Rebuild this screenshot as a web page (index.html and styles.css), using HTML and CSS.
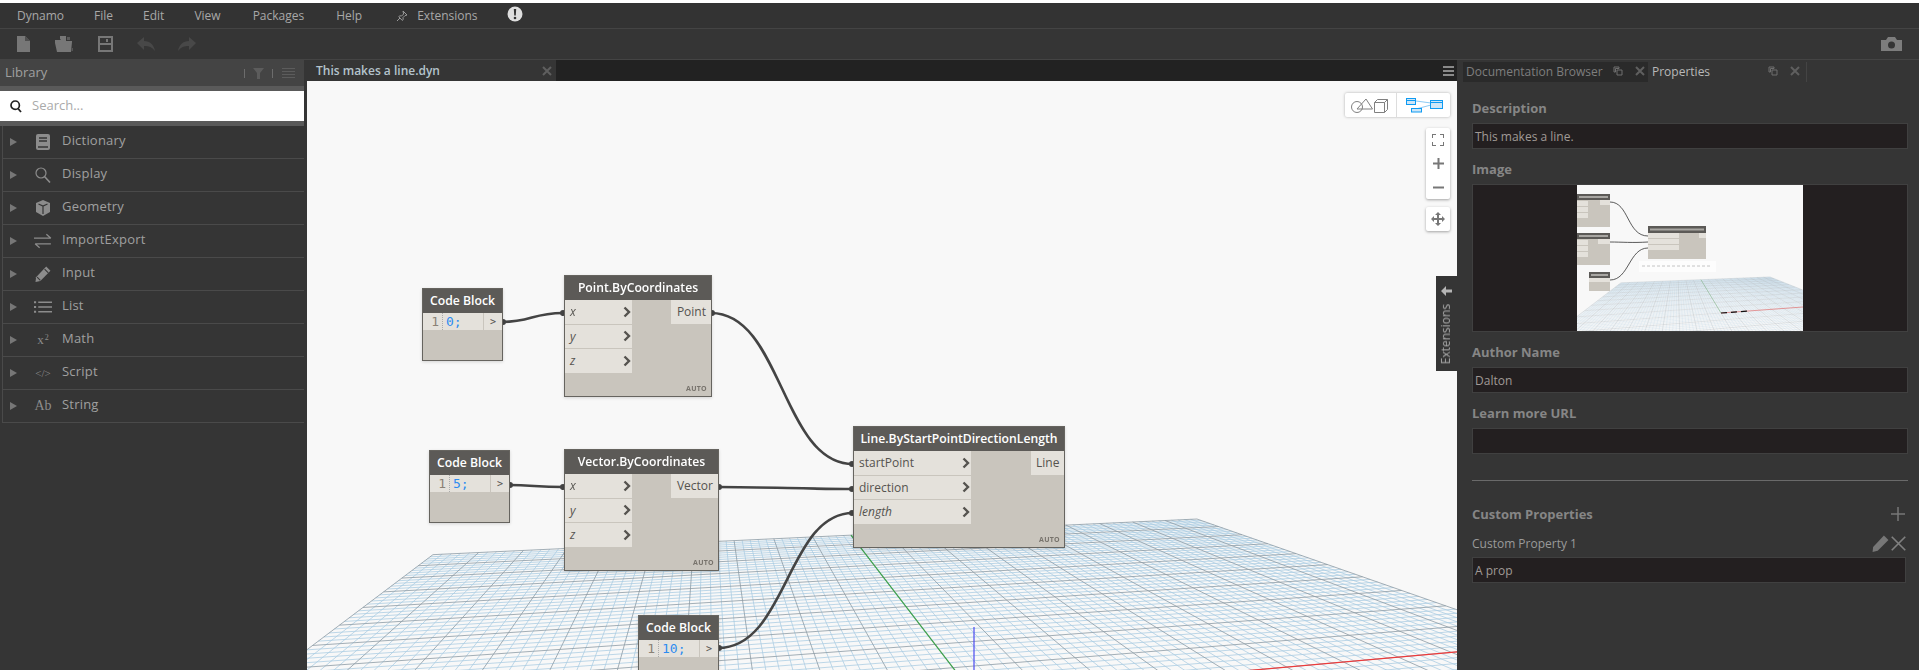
FILE: index.html
```html
<!DOCTYPE html>
<html>
<head>
  <meta charset="utf-8">
  <title>Dynamo</title>
  <link rel="stylesheet" href="styles.css">
</head>
<body>
<svg class="sprite">
  <symbol id="chev" viewBox="0 0 8 12"><path d="M1.5 1.5 L6 6 L1.5 10.5" fill="none" stroke="#55534f" stroke-width="2.4"/></symbol>
  <symbol id="popout" viewBox="0 0 10 10"><path d="M1 1h5v1.5h-3.500v3.500h-1.500zM4 4h5v5h-5z" fill="none" stroke="#6f6f6f" stroke-width="1"/></symbol>
  <symbol id="cross" viewBox="0 0 10 10"><path d="M1 1L9 9M9 1L1 9" stroke="#5f5f5f" stroke-width="2"/></symbol>
</svg>

<div class="topstrip"></div>

<div class="menubar">
  <span class="menu-item m-dynamo">Dynamo</span>
  <span class="menu-item m-file">File</span>
  <span class="menu-item m-edit">Edit</span>
  <span class="menu-item m-view">View</span>
  <span class="menu-item m-packages">Packages</span>
  <span class="menu-item m-help">Help</span>
  <svg class="pin" viewBox="0 0 12 12"><path d="M7 1l4 4-2 .6-2 2 .2 2-1 .8L2.800 6.800l.8-1 2 .2 2-2zM4 8L1 11" fill="none" stroke="#9a9a9a"/></svg>
  <span class="menu-item m-ext">Extensions</span>
  <svg class="notice" viewBox="0 0 16 16"><circle cx="8" cy="8" r="7.500" fill="#dedede"/><path d="M6.800 3h2.400l-.4 6.500h-1.600z" fill="#333"/><circle cx="8" cy="12" r="1.300" fill="#333"/></svg>
</div>

<div class="toolbar">
  <svg class="tool t-new" viewBox="0 0 13 16"><path d="M0 0h8l5 5v11H0z" fill="#777"/><path d="M8 0l5 5H8z" fill="#4f4f4f"/></svg>
  <svg class="tool t-open" viewBox="0 0 18 16"><path d="M5 0h6v3H5zM0 4h5l1-1h5v2h6v1l-1 10H2L0 7z" fill="#777"/><path d="M12 1h3v3h-3z" fill="#5a5a5a"/><path d="M16.500 12h1.500v3h-1.500z" fill="#555"/></svg>
  <svg class="tool t-save" viewBox="0 0 15 16"><path d="M0 0h15v16H0zM2 2v5h11V2zM2 9v5h11V9zM8 3h2v3H8z" fill="#777" fill-rule="evenodd"/></svg>
  <svg class="tool t-undo" viewBox="0 0 18 14"><path d="M7 0v4c6 0 10 4 11 10-3-4-6-5-11-5v4L0 6z" fill="#484848"/></svg>
  <svg class="tool t-redo" viewBox="0 0 18 14"><path d="M11 0v4C5 4 1 8 0 14c3-4 6-5 11-5v4l7-7z" fill="#484848"/></svg>
  <svg class="tool t-camera" viewBox="0 0 21 14"><path d="M0 3h5l2-3h7l2 3h5v11H0z" fill="#7d7d7d"/><circle cx="10.500" cy="8" r="3.500" fill="#353535"/></svg>
</div>

<div class="main">
  <div class="library">
    <div class="lib-head">
      <span class="lib-title">Library</span>
      <span class="lib-bar lib-bar1"></span>
      <svg class="lib-funnel" viewBox="0 0 11 11"><path d="M0 0h11L7 5v6H4V5z" fill="#5c5c5c"/></svg>
      <span class="lib-bar lib-bar2"></span>
      <span class="lib-lines"></span>
    </div>
    <div class="lib-search">
      <svg class="search-icon" viewBox="0 0 12 13"><circle cx="5.200" cy="5.200" r="4.200" fill="none" stroke="#222" stroke-width="1.700"/><path d="M8 8.500l3 3.500" stroke="#222" stroke-width="1.800"/></svg>
      <span class="search-text">Search...</span>
    </div>
    <div class="lib-list">
      <div class="lib-row"><span class="tri"></span><span class="lib-icon"><svg viewBox="0 0 14 16"><path d="M2 0h10a2 2 0 0 1 2 2v12a2 2 0 0 1-2 2H2a2 2 0 0 1-2-2V2a2 2 0 0 1 2-2z" fill="#8c8c8c"/><path d="M3 4h8M3 7h8M2 13h10" stroke="#353535" stroke-width="1.300"/></svg></span><span class="lib-label">Dictionary</span></div>
      <div class="lib-row"><span class="tri"></span><span class="lib-icon"><svg viewBox="0 0 16 16"><circle cx="6" cy="6" r="5" fill="none" stroke="#8c8c8c" stroke-width="1.200"/><path d="M9.500 9.500L15 15.500" stroke="#8c8c8c" stroke-width="1.600"/></svg></span><span class="lib-label">Display</span></div>
      <div class="lib-row"><span class="tri"></span><span class="lib-icon"><svg viewBox="0 0 14 16"><path d="M7 0l7 3v9l-7 4-7-4V3z" fill="#8c8c8c"/><path d="M2.500 4L7 6l4.500-2M7 6v8" fill="none" stroke="#353535" stroke-width="1.200"/></svg></span><span class="lib-label">Geometry</span></div>
      <div class="lib-row"><span class="tri"></span><span class="lib-icon"><svg viewBox="0 0 16 14"><path d="M0 4.500h15M11 1l4 3.500M15 9.500H1M5 13L1 9.500" fill="none" stroke="#8c8c8c" stroke-width="1.100"/></svg></span><span class="lib-label">ImportExport</span></div>
      <div class="lib-row"><span class="tri"></span><span class="lib-icon"><svg viewBox="0 0 15 15"><path d="M10.500 0.500l4 4L5 14l-4.500 1L1 10.500z" fill="#8c8c8c"/><path d="M9 3l3.500 3.500M2 10.500L5 13.500" stroke="#353535"/></svg></span><span class="lib-label">Input</span></div>
      <div class="lib-row"><span class="tri"></span><span class="lib-icon"><svg viewBox="0 0 17 12"><path d="M4 1.500h13M4 6h13M4 10.500h13" stroke="#8c8c8c" stroke-width="1.500"/><path d="M0 .500h2v2H0zM0 5h2v2H0zM0 9.500h2v2H0z" fill="#8c8c8c"/></svg></span><span class="lib-label">List</span></div>
      <div class="lib-row"><span class="tri"></span><span class="lib-icon glyph-math">x<sup>2</sup></span><span class="lib-label">Math</span></div>
      <div class="lib-row"><span class="tri"></span><span class="lib-icon glyph-script">&lt;/&gt;</span><span class="lib-label">Script</span></div>
      <div class="lib-row"><span class="tri"></span><span class="lib-icon glyph-ab">Ab</span><span class="lib-label">String</span></div>
    </div>
  </div>

  <div class="center">
    <div class="tabbar">
      <div class="tab">
        <span class="tab-name">This makes a line.dyn</span>
        <svg class="tab-x" viewBox="0 0 10 10"><use href="#cross"/></svg>
      </div>
      <div class="tab-rest"><span class="tab-menu"></span></div>
    </div>

    <div class="workspace">
      <canvas id="grid" width="1150" height="589"></canvas>

      <svg class="wires" viewBox="0 0 1150 589">
        <g fill="none" stroke="#444" stroke-width="2.600">
          <path d="M195 241C225 241 225 232 257 232"/>
          <path d="M202 404C225 404 230 406 257 406"/>
          <path d="M404 232C475 232 475 383 546 383"/>
          <path d="M411 406C460 406 500 408 546 408"/>
          <path d="M411 567C480 567 480 432 546 432"/>
        </g>
        <g fill="#444">
          <circle cx="196" cy="241" r="3"/><circle cx="203" cy="404" r="3"/><circle cx="405" cy="232" r="3"/><circle cx="412" cy="406" r="3"/><circle cx="412" cy="567" r="3"/>
          <circle cx="256" cy="232" r="3"/><circle cx="256" cy="406" r="3"/><circle cx="545" cy="383" r="3"/><circle cx="545" cy="408" r="3"/><circle cx="545" cy="432" r="3"/>
        </g>
      </svg>

      <div class="node code code-a">
        <div class="node-title">Code Block</div>
        <div class="code-row"><span class="line-no">1</span><span class="code-text">0;</span><span class="code-out">&gt;</span></div>
      </div>
      <div class="node code code-b">
        <div class="node-title">Code Block</div>
        <div class="code-row"><span class="line-no">1</span><span class="code-text">5;</span><span class="code-out">&gt;</span></div>
      </div>
      <div class="node code code-c">
        <div class="node-title">Code Block</div>
        <div class="code-row"><span class="line-no">1</span><span class="code-text">10;</span><span class="code-out">&gt;</span></div>
      </div>

      <div class="node node-point">
        <div class="node-title">Point.ByCoordinates</div>
        <div class="node-body">
          <div class="inputs">
            <div class="port"><i>x</i><svg class="chev"><use href="#chev"/></svg></div>
            <div class="port"><i>y</i><svg class="chev"><use href="#chev"/></svg></div>
            <div class="port"><i>z</i><svg class="chev"><use href="#chev"/></svg></div>
          </div>
          <div class="output">Point</div>
        </div>
        <div class="lacing">AUTO</div>
      </div>

      <div class="node node-vector">
        <div class="node-title">Vector.ByCoordinates</div>
        <div class="node-body">
          <div class="inputs">
            <div class="port"><i>x</i><svg class="chev"><use href="#chev"/></svg></div>
            <div class="port"><i>y</i><svg class="chev"><use href="#chev"/></svg></div>
            <div class="port"><i>z</i><svg class="chev"><use href="#chev"/></svg></div>
          </div>
          <div class="output">Vector</div>
        </div>
        <div class="lacing">AUTO</div>
      </div>

      <div class="node node-line">
        <div class="node-title">Line.ByStartPointDirectionLength</div>
        <div class="node-body">
          <div class="inputs">
            <div class="port">startPoint<svg class="chev"><use href="#chev"/></svg></div>
            <div class="port">direction<svg class="chev"><use href="#chev"/></svg></div>
            <div class="port"><i>length</i><svg class="chev"><use href="#chev"/></svg></div>
          </div>
          <div class="output">Line</div>
        </div>
        <div class="lacing">AUTO</div>
      </div>

      <div class="view-toggle">
        <div class="toggle-half">
          <svg width="38" height="15" viewBox="0 0 38 15"><g fill="none" stroke="#808080" stroke-width="1"><circle cx="6" cy="9" r="5.500"/><path d="M15 1L6 11H21.500Z"/><path d="M23.500 4.500h10v10h-10zM23.500 4.500l3-3h10v10l-3 3M33.500 4.500l3-3"/></g></svg>
        </div>
        <div class="toggle-half toggle-right">
          <svg width="38" height="16" viewBox="0 0 38 16"><g stroke="#0f9bf2" fill="#cfe6f7"><path d="M10 4L25 6M6 13L25 8" fill="none" stroke="#8ccbf5"/><rect x=".5" y="1.500" width="9" height="6"/><rect x="5.500" y="11.500" width="10" height="3.500"/><rect x="24.500" y="3.500" width="12" height="8"/></g><path d="M.5 3.500h9M24.500 5.500h12" stroke="#0f9bf2"/></svg>
        </div>
      </div>

      <div class="zoom-box">
        <svg width="12" height="12" viewBox="0 0 12 12"><path d="M0 4V0h4M8 0h4v4M12 8v4H8M4 12H0V8" fill="none" stroke="#777" stroke-width="2"/></svg>
        <svg width="11" height="11" viewBox="0 0 11 11"><path d="M5.500 0v11M0 5.500h11" stroke="#777" stroke-width="2"/></svg>
        <svg width="11" height="11" viewBox="0 0 11 11"><path d="M0 5.500h11" stroke="#777" stroke-width="2"/></svg>
      </div>
      <div class="pan-box">
        <svg width="14" height="14" viewBox="0 0 14 14"><path d="M7 0l3 3H8v3h3V4l3 3-3 3V8H8v3h2l-3 3-3-3h2V8H3v2L0 7l3-3v2h3V3H4z" fill="#777"/></svg>
      </div>

      <div class="ext-tab">
        <svg width="11" height="10" viewBox="0 0 11 10"><path d="M5 0L0 5l5 5V6.500h6v-3H5z" fill="#b5b5b5"/></svg>
        <span class="ext-text">Extensions</span>
      </div>
    </div>
  </div>

  <div class="side">
    <div class="side-tabs">
      <div class="side-tab side-tab-dark">
        <span class="side-tab-name">Documentation Browser</span>
        <svg class="tab-pop"><use href="#popout"/></svg>
        <svg class="tab-close"><use href="#cross"/></svg>
      </div>
      <div class="side-tab side-tab-on">
        <span class="side-tab-name">Properties</span>
        <svg class="tab-pop"><use href="#popout"/></svg>
        <svg class="tab-close"><use href="#cross"/></svg>
      </div>
    </div>

    <div class="props">
      <div class="field-label">Description</div>
      <div class="field-box">This makes a line.</div>

      <div class="field-label">Image</div>
      <div class="image-box">
        <div class="thumb">
          <canvas id="thumbgrid" width="226" height="148"></canvas>
          <svg class="thumb-nodes" viewBox="0 0 226 148">
            <g fill="#c9c5bd">
              <rect x="0" y="10" width="33" height="33"/><rect x="0" y="49" width="33" height="32"/><rect x="71" y="42" width="58" height="33"/><rect x="12" y="88" width="21" height="19"/>
            </g>
            <g fill="#5c5a57">
              <rect x="0" y="10" width="33" height="6"/><rect x="0" y="49" width="33" height="6"/><rect x="71" y="42" width="58" height="7"/><rect x="12" y="88" width="21" height="6"/>
            </g>
            <g stroke="#a8a6a2" stroke-width="2">
              <path d="M2 13h29M2 52h29M73 45.500h54M14 91h17"/>
            </g>
            <g fill="#e4e1db">
              <rect x="0" y="17" width="11" height="5"/><rect x="0" y="23" width="11" height="5"/><rect x="0" y="29" width="11" height="5"/>
              <rect x="0" y="56" width="11" height="5"/><rect x="0" y="62" width="11" height="5"/><rect x="0" y="68" width="11" height="5"/>
              <rect x="71" y="49" width="31" height="5"/><rect x="71" y="55" width="31" height="5"/><rect x="71" y="61" width="31" height="5"/>
              <rect x="23" y="16" width="10" height="5"/><rect x="21" y="55" width="12" height="5"/><rect x="122" y="49" width="7" height="5"/><rect x="12" y="94" width="21" height="4"/>
              <rect x="62" y="77" width="77" height="11" fill="#fdfdfd"/>
            </g>
            <g fill="none" stroke="#333" stroke-width=".8">
              <path d="M33 18C52 18 50 52 71 52"/><path d="M33 58C45 58 55 59 71 58"/><path d="M33 96C52 96 52 64 71 64"/>
            </g>
            <path d="M65 82h70" stroke="#c4c4c4" stroke-dasharray="3 2"/>
          </svg>
        </div>
      </div>

      <div class="field-label">Author Name</div>
      <div class="field-box">Dalton</div>

      <div class="field-label">Learn more URL</div>
      <div class="field-box"></div>

      <div class="rule"></div>

      <div class="custom-head">
        <span class="field-label custom-title">Custom Properties</span>
        <svg width="14" height="14" viewBox="0 0 14 14"><path d="M7 0v14M0 7h14" stroke="#777" stroke-width="1.500"/></svg>
      </div>
      <div class="custom-row">
        <span class="custom-name">Custom Property 1</span>
        <span class="custom-actions">
          <svg width="17" height="17" viewBox="0 0 15 15"><path d="M10.500 .5l4 4L5 14l-4.500 1L1 10.500z" fill="#777"/></svg>
          <svg width="15" height="15" viewBox="0 0 10 10"><path d="M.5 .5L9.500 9.500M9.500 .5L.5 9.500" stroke="#808080" stroke-width="1.100"/></svg>
        </span>
      </div>
      <div class="field-box custom-box">A prop</div>
    </div>
  </div>
</div>

<script src="grid.js"></script>
</body>
</html>
```

FILE: styles.css
```css
* {
  box-sizing: border-box;
}

body {
  margin: 0;
  height: 670px;
  overflow: hidden;
  background: #353535;
  font-family: "Open Sans", "Liberation Sans", sans-serif;
  font-size: 12px;
  color: #a5a5a5;
  display: flex;
  flex-direction: column;
}

.sprite {
  display: none;
}

.topstrip {
  height: 3px;
  background: #fff;
}

/* menu + toolbar */

.menubar {
  height: 26px;
  flex: none;
  display: flex;
  align-items: center;
  background: #333;
  border-bottom: 1px solid #444;
}

.menu-item {
  color: #a8a8a8;
}

.m-dynamo { margin-left: 17px; }
.m-file { margin-left: 30px; }
.m-edit { margin-left: 30px; }
.m-view { margin-left: 30px; }
.m-packages { margin-left: 32px; }
.m-help { margin-left: 32px; }
.m-ext { margin-left: 9px; }

.pin {
  width: 12px;
  height: 12px;
  margin-left: 34px;
}

.notice {
  width: 16px;
  height: 16px;
  margin-left: 29px;
  margin-top: -3px;
}

.toolbar {
  height: 31px;
  flex: none;
  display: flex;
  align-items: center;
  background: #353535;
  border-bottom: 1px solid #444;
}

.tool {
  flex: none;
}

.t-new { width: 13px; height: 16px; margin-left: 17px; }
.t-open { width: 18px; height: 16px; margin-left: 25px; }
.t-save { width: 15px; height: 16px; margin-left: 25px; }
.t-undo { width: 18px; height: 14px; margin-left: 24px; }
.t-redo { width: 18px; height: 14px; margin-left: 23px; }
.t-camera { width: 21px; height: 14px; margin-left: auto; margin-right: 17px; }

.main {
  flex: 1;
  display: flex;
  min-height: 0;
}

/* library */

.library {
  width: 307px;
  flex: none;
  background: #353535;
}

.lib-head {
  width: 304px;
  height: 26px;
  display: flex;
  align-items: center;
  background: #444;
  padding-left: 5px;
}

.lib-title {
  color: #a0a0a0;
  font-size: 13px;
  margin-right: auto;
  margin-top: -2px;
}

.lib-bar {
  width: 1px;
  height: 9px;
  background: #6c6c6c;
}

.lib-funnel {
  width: 11px;
  height: 11px;
  margin: 0 8px;
}

.lib-lines {
  width: 13px;
  height: 10px;
  margin: 0 9px;
  background: repeating-linear-gradient(#5c5c5c 0 1px, #444 1px 3px);
}

.lib-search {
  width: 304px;
  height: 40px;
  display: flex;
  align-items: center;
  padding-left: 10px;
  background: #fff;
  border-top: 5px solid #5a5a5a;
  border-bottom: 5px solid #5a5a5a;
}

.search-icon {
  width: 12px;
  height: 13px;
}

.search-text {
  margin-left: 10px;
  margin-top: -3px;
  font-size: 13px;
  color: #aaa;
}

.lib-list {
  width: 302px;
  margin-left: 2px;
  border-left: 1px solid #4a4a4a;
}

.lib-row {
  height: 33px;
  display: flex;
  align-items: center;
  padding-left: 7px;
  border-bottom: 1px solid #4a4a4a;
}

.tri {
  width: 0;
  height: 0;
  border-left: 7px solid #777;
  border-top: 4.5px solid transparent;
  border-bottom: 4.5px solid transparent;
}

.lib-icon {
  width: 18px;
  height: 18px;
  margin-left: 17px;
  display: flex;
  align-items: center;
  justify-content: center;
  color: #8c8c8c;
  flex: none;
}

.lib-icon svg {
  width: 100%;
  height: 16px;
}

.glyph-math {
  font-family: "Liberation Serif", serif;
  font-size: 13px;
}

.glyph-math sup {
  font-size: 8px;
  margin-top: -6px;
  margin-left: 1px;
}

.glyph-script {
  font-family: "Liberation Serif", serif;
  font-size: 11px;
}

.glyph-ab {
  font-family: "Liberation Serif", serif;
  font-size: 14px;
}

.lib-label {
  margin-left: 10px;
  font-size: 13px;
  letter-spacing: 0.2px;
  color: #a0a0a0;
  margin-top: -4px;
}

/* centre */

.center {
  width: 1150px;
  flex: none;
  display: flex;
  flex-direction: column;
}

.tabbar {
  height: 21px;
  flex: none;
  display: flex;
}

.tab {
  width: 249px;
  display: flex;
  align-items: center;
  justify-content: space-between;
  padding: 0 4px 0 9px;
  background: #353535;
}

.tab-name {
  font-weight: 600;
  color: #b4c3cc;
}

.tab-x {
  width: 10px;
  height: 10px;
}

.tab-rest {
  flex: 1;
  background: #222;
  display: flex;
  align-items: center;
  justify-content: flex-end;
  padding-right: 3px;
}

.tab-menu {
  width: 11px;
  height: 10px;
  background: repeating-linear-gradient(#8a8a8a 0 2px, #222 2px 4px);
}

.workspace {
  position: relative;
  flex: 1;
  background: #f8f8f8;
  overflow: hidden;
}

#grid,
.wires {
  position: absolute;
  left: 0;
  top: 0;
  width: 1150px;
  height: 589px;
}

/* nodes */

.node {
  position: absolute;
  background: #c9c5bd;
  border: 1px solid #66645f;
  box-shadow: 0 1px 3px rgba(0, 0, 0, 0.15);
}

.node-title {
  height: 24px;
  line-height: 24px;
  font-size: 12.2px;
  text-align: center;
  background: #5c5a57;
  color: #fff;
  font-weight: 600;
  white-space: nowrap;
}

.node-body {
  display: flex;
  justify-content: space-between;
  align-items: flex-start;
}

.inputs {
  display: flex;
  flex-direction: column;
  gap: 1px;
}

.port {
  height: 23.5px;
  display: flex;
  align-items: center;
  justify-content: space-between;
  padding: 0 1px 0 5px;
  background: #e4e1db;
  color: #55534f;
}

.chev {
  width: 8px;
  height: 12px;
}

.output {
  height: 23.5px;
  line-height: 23px;
  padding: 0 5px;
  background: #e4e1db;
  color: #55534f;
  text-align: right;
}

.lacing {
  position: absolute;
  right: 4px;
  bottom: 3px;
  font-size: 7px;
  font-weight: 700;
  letter-spacing: 0.3px;
  color: #77736c;
}

.node-point { left: 257px; top: 194px; width: 148px; height: 122px; }
.node-point .inputs { width: 67px; }
.node-point .output { width: 40px; }

.node-vector { left: 257px; top: 368px; width: 155px; height: 122px; }
.node-vector .inputs { width: 67px; }
.node-vector .output { width: 47px; }

.node-line { left: 546px; top: 345px; width: 212px; height: 122px; }
.node-line .inputs { width: 117px; }
.node-line .output { width: 33px; }

.code { width: 81px; height: 73px; }
.code-a { left: 115px; top: 207px; }
.code-b { left: 122px; top: 369px; }
.code-c { left: 331px; top: 534px; }

.code-row {
  height: 17px;
  display: flex;
  align-items: center;
  background: #e4e1db;
  font-family: "DejaVu Sans Mono", "Liberation Mono", monospace;
  font-size: 13px;
}

.line-no {
  width: 20px;
  height: 100%;
  padding-right: 3px;
  text-align: right;
  line-height: 17px;
  color: #8a8175;
  border-right: 1px dotted #aaa;
}

.code-text {
  flex: 1;
  padding-left: 3px;
  color: #2d8cf0;
}

.code-out {
  width: 19px;
  height: 100%;
  line-height: 17px;
  text-align: center;
  font-size: 10px;
  color: #55534f;
  border-left: 1px solid #c9c5bd;
}

/* canvas controls */

.view-toggle {
  position: absolute;
  left: 1038px;
  top: 12px;
  width: 105px;
  height: 24px;
  display: flex;
  background: #fff;
  border-radius: 2px;
  box-shadow: 0 0 3px rgba(0, 0, 0, 0.3);
}

.toggle-half {
  flex: 1;
  display: flex;
  align-items: center;
  justify-content: center;
}

.toggle-right {
  border-left: 1px solid #ddd;
  padding-left: 3px;
}

.zoom-box {
  position: absolute;
  left: 1119px;
  top: 47px;
  width: 24px;
  height: 71px;
  display: flex;
  flex-direction: column;
  align-items: center;
  justify-content: space-around;
  background: #fff;
  border-radius: 2px;
  box-shadow: 0 1px 3px rgba(0, 0, 0, 0.35);
}

.pan-box {
  position: absolute;
  left: 1119px;
  top: 126px;
  width: 24px;
  height: 24px;
  display: flex;
  align-items: center;
  justify-content: center;
  background: #fff;
  border-radius: 2px;
  box-shadow: 0 1px 3px rgba(0, 0, 0, 0.35);
}

.ext-tab {
  position: absolute;
  left: 1129px;
  top: 195px;
  width: 21px;
  height: 95px;
  display: flex;
  flex-direction: column;
  align-items: center;
  padding-top: 10px;
  gap: 8px;
  background: #353535;
}

.ext-text {
  writing-mode: vertical-rl;
  transform: rotate(180deg);
  margin-right: 2px;
  color: #aaa;
}

/* right panel */

.side {
  flex: 1;
  min-width: 0;
  display: flex;
  flex-direction: column;
}

.side-tabs {
  height: 22px;
  flex: none;
  display: flex;
  align-items: flex-end;
  padding-left: 6px;
}

.side-tab {
  height: 20px;
  display: flex;
  align-items: center;
  padding: 0 0 2px 3px;
  position: relative;
}

.side-tab-dark {
  width: 185px;
  background: #2a2a2a;
  color: #7e7e7e;
}

.side-tab-on {
  width: 155px;
  margin-left: 4px;
  padding-left: 0;
  color: #b8b8b8;
  border-right: 1px solid #444;
}

.tab-pop,
.tab-close {
  position: absolute;
  top: 4px;
  width: 10px;
  height: 10px;
}

.side-tab-dark .tab-pop { left: 150px; }
.side-tab-dark .tab-close { left: 172px; }
.side-tab-on .tab-pop { left: 116px; }
.side-tab-on .tab-close { left: 138px; }

.props {
  padding: 16px 11px 0 15px;
}

.field-label {
  height: 20px;
  line-height: 20px;
  margin-bottom: 5px;
  font-size: 13px;
  font-weight: 700;
  color: #868686;
}

.field-box {
  height: 26px;
  line-height: 26px;
  padding-left: 2px;
  margin-bottom: 10px;
  background: #231f20;
  border: 1px solid #404040;
  color: #a09a96;
}

.image-box {
  height: 148px;
  margin-bottom: 10px;
  display: flex;
  justify-content: center;
  background: #231f20;
  border: 1px solid #404040;
}

.thumb {
  position: relative;
  width: 226px;
  height: 146px;
  overflow: hidden;
  background: #f8f8f8;
}

#thumbgrid,
.thumb-nodes {
  position: absolute;
  left: 0;
  top: -1px;
  width: 226px;
  height: 148px;
}

.rule {
  height: 1px;
  margin-top: 26px;
  background: #6a6a6a;
}

.custom-head {
  height: 20px;
  margin-top: 23px;
  display: flex;
  align-items: center;
  justify-content: space-between;
  padding-right: 3px;
}

.custom-title {
  margin-bottom: 0;
}

.custom-row {
  height: 20px;
  margin-top: 9px;
  display: flex;
  align-items: center;
  justify-content: space-between;
  padding-right: 2px;
}

.custom-name {
  color: #9a9a9a;
}

.custom-actions {
  display: flex;
  align-items: center;
  gap: 2px;
}

.custom-box {
  margin-top: 4px;
  margin-right: 2px;
}
```

FILE: grid.js
```js
// floor grid behind the nodes, drawn as a plane between two vanishing points
// v stops short of -1, that end of the plane falls behind the camera
const NEAR = -0.5;

function project(g, u, v) {
  const w = g.a * u + g.b * v + 1;
  return [
    (g.a * u * g.vp1[0] + g.b * v * g.vp2[0] + g.o[0]) / w,
    (g.a * u * g.vp1[1] + g.b * v * g.vp2[1] + g.o[1]) / w
  ];
}

function segment(ctx, g, u1, v1, u2, v2, color, width) {
  const p = project(g, u1, v1);
  const q = project(g, u2, v2);
  ctx.strokeStyle = color;
  ctx.lineWidth = width;
  ctx.beginPath();
  ctx.moveTo(p[0], p[1]);
  ctx.lineTo(q[0], q[1]);
  ctx.stroke();
}

function gridPair(ctx, g, t, color) {
  segment(ctx, g, t, NEAR, t, 1, color, 1);
  if (t >= NEAR) segment(ctx, g, -1, t, 1, t, color, 1);
}

function drawGrid(ctx, g) {
  for (let i = 0; i <= g.cells; i++) {
    if (i % 5 == 0) continue;
    gridPair(ctx, g, i / g.cells * 2 - 1, g.minor);
  }
  for (let i = 0; i <= g.cells; i += 5) {
    gridPair(ctx, g, i / g.cells * 2 - 1, g.major);
  }
  segment(ctx, g, 0, 0, 1, 0, g.red, g.axis);
  segment(ctx, g, 0, 0, 0, 1, g.green, g.axis);
}

const floor = document.getElementById('grid').getContext('2d');
drawGrid(floor, {
  vp1: [4555, 267], vp2: [400, 267], o: [667, 614],
  a: 0.175, b: 0.854, cells: 100,
  minor: 'rgba(168, 203, 226, 0.75)', major: 'rgba(140, 155, 165, 0.8)',
  red: '#ee3b3b', green: '#3fa34d', axis: 1.2
});
floor.strokeStyle = '#4a4af0';
floor.lineWidth = 1.2;
floor.beginPath();
floor.moveTo(667, 546);
floor.lineTo(667, 614);
floor.stroke();

const mini = document.getElementById('thumbgrid').getContext('2d');
drawGrid(mini, {
  vp1: [1141, 56], vp2: [100, 56], o: [144, 129],
  a: 0.134, b: 0.839, cells: 100,
  minor: 'rgba(175, 205, 225, 0.2)', major: 'rgba(140, 155, 165, 0.22)',
  red: 'rgba(230, 90, 90, 0.7)', green: 'rgba(70, 160, 80, 0.4)', axis: 0.8
});
mini.strokeStyle = '#111';
mini.lineWidth = 1.2;
mini.setLineDash([6, 4]);
mini.beginPath();
mini.moveTo(144, 129);
mini.lineTo(172, 127);
mini.stroke();
```
